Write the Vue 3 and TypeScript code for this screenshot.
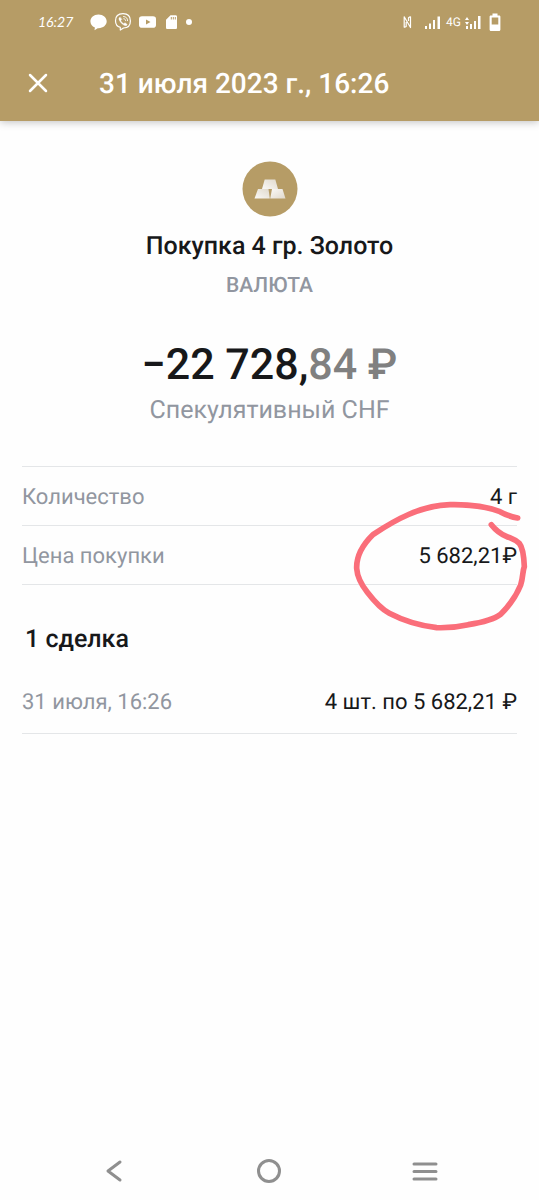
<script setup lang="ts">
interface Detail {
  label: string
  value: string
  marked?: boolean
}

const title = '31 июля 2023 г., 16:26'
const details: Detail[] = [
  { label: 'Количество', value: '4 г' },
  { label: 'Цена покупки', value: '5 682,21₽', marked: true },
]
const deals: Detail[] = [{ label: '31 июля, 16:26', value: '4 шт. по 5 682,21 ₽' }]
</script>

<template>
  <div class="screen">
    <header class="top">
      <div class="status">
        <div class="status-group">
          <time class="clock">16:27</time>
          <svg class="notices" width="104" height="20" viewBox="0 0 104 20" fill="#fff" aria-hidden="true">
            <path d="M8.500 2.500c4.700 0 8.200 3 8.200 6.800s-3.500 6.900-8.200 6.900h-.8L4.500 18.200l.4-2.700C2 14.400.4 12.200.4 9.300c0-3.800 3.400-6.800 8.100-6.800z" />
            <g fill="none" stroke="#fff" stroke-width="1.200" stroke-linecap="round" stroke-linejoin="round" transform="translate(0 -2)">
              <path d="M33 3.700c5 0 7.400 1.800 7.400 7.300 0 5.300-2.400 7-6.900 7l-3.200 2v-2.600c-3.300-.8-4.800-2.800-4.800-6.600 0-5.300 2.600-7.100 7.500-7.100z" />
              <path d="M33.500 6.500c2.700.2 4 1.600 4.100 4.200M33.800 8.700c1.200.2 1.800.8 1.900 2" stroke-width="0.900" />
              <path d="M30 7.200c-1.300.6-1.300 1.900-.5 3.300 1.200 2.300 2.900 4 5.300 5 1.200.4 2-.1 2.400-1.100l-2.200-1.700-1.200 1c-1.600-.7-2.600-1.800-3-3.200l.9-1z" fill="#fff" stroke-width="0.400" />
            </g>
            <path fill-rule="evenodd" d="M52 4.200h11c2 0 3 .9 3 2.800v6c0 1.900-1 2.800-3 2.800H52c-2 0-3-.9-3-2.800V7c0-1.900 1-2.800 3-2.800zm4 3.200v5.200l4.500-2.600z" />
            <path fill-rule="evenodd" d="M80.500 3.200h5c1 0 1.500.5 1.500 1.500v10.800c0 1-.5 1.500-1.500 1.500h-8c-1 0-1.500-.5-1.500-1.500V7.700zm.3 1.700v2.600h1V4.900zm2 0v2.600h1V4.900zm2 0v2.600h1V4.900z" />
            <circle cx="99" cy="10" r="3" />
          </svg>
        </div>
        <div class="status-group right">
          <svg width="42" height="20" viewBox="0 0 42 20" aria-hidden="true" fill="#fff">
            <path d="M2.200 15.500V4.800l6.300 10.700V4.500M2.200 15.500l2-1V10M8.500 4.500l-2 1.200V9" fill="none" stroke="#fff" stroke-width="1.200" stroke-linejoin="round" />
            <path d="M23 14h2v3h-2zM27 11.500h2V17h-2zM31 8h2v9h-2zM35.500 4.500h2.500V17h-2.500z" />
          </svg>
          <span class="network">4G</span>
          <svg width="42" height="20" viewBox="0 0 42 20" aria-hidden="true" fill="#fff">
            <path d="M2 9l2-3 2 3zM2 11h4l-2 3zM3 15h2v3H3zM7 13h2v5H7zM11 10h2v8h-2zM15 5h2.500v13H15zM29.500 2.500h5v2h1.500c.9 0 1.400.4 1.400 1.200v12.800c0 .9-.5 1.500-1.400 1.500h-8c-.9 0-1.400-.6-1.400-1.500V5.700c0-.8.500-1.200 1.400-1.200h1.500zM28.700 6.500v7h6.600v-7z" fill-rule="evenodd" transform="translate(0 -1)" />
          </svg>
        </div>
      </div>
      <div class="bar">
        <button class="close" type="button" aria-label="Закрыть">
          <svg width="20" height="20" viewBox="0 0 20 20" fill="none" stroke="#fff" stroke-width="2.500" stroke-linecap="round">
            <path d="M2 2l16 16M18 2L2 18" />
          </svg>
        </button>
        <h1>{{ title }}</h1>
      </div>
    </header>

    <main>
      <section class="summary">
        <svg class="coin" width="56" height="56" viewBox="0 0 56 56" aria-hidden="true">
          <defs>
            <linearGradient id="bar-left" x1="0" y1="1" x2="1" y2="0">
              <stop offset="0" stop-color="#faf9f7" />
              <stop offset="1" stop-color="#e0d9cc" />
            </linearGradient>
            <linearGradient id="bar-right" x1="0" y1="0" x2="1" y2="1">
              <stop offset="0" stop-color="#faf9f7" />
              <stop offset="1" stop-color="#e0d9cc" />
            </linearGradient>
          </defs>
          <circle cx="28" cy="28" r="27.500" fill="#b69c66" />
          <path d="M22.700 18.500h10.600l2.700 9.500H20z" fill="url(#bar-left)" />
          <path d="M16 28h10.500l1.300 9.500H12.500z" fill="url(#bar-left)" />
          <path d="M30 28h10.500l3 9.500H28.200z" fill="url(#bar-right)" />
        </svg>
        <h2>Покупка 4 гр. Золото</h2>
        <p class="kind">ВАЛЮТА</p>
        <p class="amount">−22 728,<span>84 ₽</span></p>
        <p class="account">Спекулятивный CHF</p>
      </section>

      <dl class="rows">
        <div v-for="row in details" :key="row.label" class="row">
          <dt>{{ row.label }}</dt>
          <dd>{{ row.value }}</dd>
          <svg v-if="row.marked" class="mark" width="199" height="180" viewBox="0 0 597 540" aria-hidden="true">
            <path d="M533 174C515 171 500 166 480 155C430 136 380 133 330 134C240 137 165 180 100 223C65 257 49 290 50 325C52 355 65 375 82 397C105 427 125 448 148 460C190 482 235 497 290 503C325 504 350 502 385 494C425 488 460 480 482 463C510 435 530 405 542 375C550 350 547 335 553 320C552 295 548 262 538 250C523 237 515 236 499 229C480 221 466 209 454 194" />
          </svg>
        </div>
      </dl>

      <h3>1 сделка</h3>
      <dl class="rows deals">
        <div v-for="deal in deals" :key="deal.label" class="row">
          <dt>{{ deal.label }}</dt>
          <dd>{{ deal.value }}</dd>
        </div>
      </dl>
    </main>

    <nav class="system">
      <button type="button" aria-label="Назад">
        <svg width="28" height="28" viewBox="0 0 28 28"><path d="M20 5L8 14l12 9" /></svg>
      </button>
      <button type="button" aria-label="Домой">
        <svg width="28" height="28" viewBox="0 0 28 28"><circle cx="14" cy="14" r="10.500" /></svg>
      </button>
      <button type="button" aria-label="Меню">
        <svg width="28" height="28" viewBox="0 0 28 28"><path d="M3 7h22M3 14.500h22M3 22h22" /></svg>
      </button>
    </nav>
  </div>
</template>

<style>
body {
  margin: 0;
  background: #fefefe;
}
</style>

<style scoped>
.screen {
  display: flex;
  flex-direction: column;
  min-height: 100vh;
  font-family: Roboto, "Liberation Sans", sans-serif;
  text-rendering: geometricPrecision;
  color: #17181a;
}
h1, h2, h3, p, dl, dd {
  margin: 0;
}
button {
  display: flex;
  padding: 0;
  border: 0;
  background: none;
  cursor: pointer;
}
.top {
  background: #b69c66;
  color: #fff;
  box-shadow: 0 1px 8px rgba(0, 0, 0, 0.25);
}
.status {
  display: flex;
  justify-content: space-between;
  align-items: center;
  height: 44px;
  padding: 0 34px 0 38px;
}
.status-group {
  display: flex;
  align-items: center;
}
.clock {
  width: 52px;
  font: italic 400 14px/20px Lato, sans-serif;
}
.right {
  gap: 2px;
}
.network {
  font-size: 12px;
  line-height: 20px;
}
.bar {
  display: flex;
  align-items: center;
  gap: 51px;
  height: 77px;
  padding: 0 28px;
}
h1 {
  font-size: 28px;
  line-height: 36px;
  padding-top: 2px;
  font-weight: 500;
}
main {
  flex: 1;
  padding: 40px 22px 0;
}
.summary {
  display: flex;
  flex-direction: column;
  align-items: center;
  padding-bottom: 39px;
  text-align: center;
}
h2 {
  margin-top: 13px;
  font-size: 25px;
  line-height: 34px;
  font-weight: 500;
}
.kind {
  margin-top: 8px;
  font-size: 21px;
  line-height: 28px;
  font-weight: 500;
  color: #9196a0;
}
.amount {
  margin-top: 39px;
  font-size: 43px;
  line-height: 52px;
  font-weight: 500;
}
.amount span {
  color: #808080;
}
.account {
  margin-top: 4px;
  font-size: 25px;
  line-height: 32px;
  color: #9196a0;
}
.rows {
  border-top: 1px solid #e4e6e8;
}
.row {
  position: relative;
  display: flex;
  justify-content: space-between;
  align-items: center;
  height: 54px;
  padding-top: 4px;
  border-bottom: 1px solid #e4e6e8;
  font-size: 22px;
  line-height: 28px;
}
dt {
  color: #9196a0;
}
.mark {
  position: absolute;
  top: -66px;
  right: -22px;
  fill: none;
  stroke: #fa6e7a;
  stroke-width: 17;
  stroke-linecap: round;
  stroke-linejoin: round;
  pointer-events: none;
}
h3 {
  padding: 39px 3px 0;
  font-size: 25px;
  line-height: 32px;
  font-weight: 500;
}
.deals {
  border-top: 0;
  margin-top: 12px;
}
.deals .row {
  height: 61px;
}
.system {
  display: flex;
  justify-content: space-around;
  padding: 0 36px 15px;
}
.system svg {
  fill: none;
  stroke: #8f8f8f;
  stroke-width: 3;
  stroke-linecap: round;
  stroke-linejoin: round;
}
</style>
